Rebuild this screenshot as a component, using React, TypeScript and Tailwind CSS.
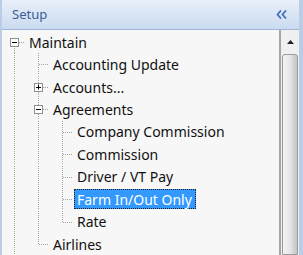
type Conn = "first" | "tee" | "last";

type Row = {
  label: string;
  guides: boolean[];
  conn: Conn;
  box?: "minus" | "plus";
  selected?: boolean;
};

const rows: Row[] = [
  { label: "Maintain", guides: [], conn: "first", box: "minus" },
  { label: "Accounting Update", guides: [true], conn: "tee" },
  { label: "Accounts...", guides: [true], conn: "tee", box: "plus" },
  { label: "Agreements", guides: [true], conn: "tee", box: "minus" },
  { label: "Company Commission", guides: [true, true], conn: "tee" },
  { label: "Commission", guides: [true, true], conn: "tee" },
  { label: "Driver / VT Pay", guides: [true, true], conn: "tee" },
  { label: "Farm In/Out Only", guides: [true, true], conn: "tee", selected: true },
  { label: "Rate", guides: [true, true], conn: "last" },
  { label: "Airlines", guides: [true], conn: "last" },
];

const DOT = "#a3a3a3";

function Guide({ on }: { on: boolean }) {
  return (
    <svg className="w-6 h-full shrink-0" shapeRendering="crispEdges">
      {on && (
        <line x1="12.5" x2="12.5" y1="0" y2="100%" stroke={DOT} strokeDasharray="1 1" />
      )}
    </svg>
  );
}

function Connector({ conn, box }: { conn: Conn; box?: "minus" | "plus" }) {
  return (
    <svg className="w-6 h-full shrink-0" shapeRendering="crispEdges">
      {conn === "first" && (
        <line x1="12.5" x2="12.5" y1="50%" y2="100%" stroke={DOT} strokeDasharray="1 1" />
      )}
      {conn === "tee" && (
        <line x1="12.5" x2="12.5" y1="0" y2="100%" stroke={DOT} strokeDasharray="1 1" />
      )}
      {conn === "last" && (
        <line x1="12.5" x2="12.5" y1="0" y2="50%" stroke={DOT} strokeDasharray="1 1" />
      )}
      <line x1="13" x2="23" y1="50%" y2="50%" stroke={DOT} strokeDasharray="1 1" transform="translate(0 0.5)" />
      {box && (
        <g transform="translate(0 -4)">
          <rect x="8.5" y="50%" width="8" height="8" fill="#ffffff" stroke="#8f8f8f" />
          <line x1="10" x2="15" y1="50%" y2="50%" stroke="#000" transform="translate(0 4.5)" />
        </g>
      )}
    </svg>
  );
}

export default function App() {
  return (
    <div
      className="w-[303px] h-[255px] overflow-hidden flex flex-col bg-[#f7f7f7] border-l-2 border-r-4 border-[#b9cde6]"
      style={{ fontFamily: '"Noto Sans", "Open Sans", sans-serif' }}
    >
      <div className="h-[30px] shrink-0 flex items-center justify-between pl-[10px] pr-[11px] bg-gradient-to-b from-[#e8eff9] to-[#cbdbf0] border-b border-[#9fb6d4]">
        <span className="text-[13px] text-[#3a5c95]">Setup</span>
        <svg width="12" height="9" viewBox="0 0 12 9">
          <path d="M5 0.5 L1.5 4.5 L5 8.5 M10 0.5 L6.5 4.5 L10 8.5" fill="none" stroke="#4372b8" strokeWidth="1.8" />
        </svg>
      </div>
      <div className="flex flex-1 min-h-0">
        <div className="flex-1 pt-[1px] text-[14px] text-[#111111]">
          {rows.map((r, i) => (
            <div key={i} className="h-[22.44px] flex items-stretch">
              {r.guides.map((g, j) => (
                <Guide key={j} on={g} />
              ))}
              <div className="relative flex shrink-0">
                <Connector conn={r.conn} box={r.box} />
                {r.box === "plus" && (
                  <div className="absolute left-[12px] top-1/2 -translate-y-1/2 h-[5px] w-px bg-black" />
                )}
              </div>
              <div className="flex items-center">
                {r.selected ? (
                  <span className="h-[20px] flex items-center px-[2px] pr-[3px] bg-[#3399ff] text-white border border-dotted border-[#202020] whitespace-nowrap">
                    {r.label}
                  </span>
                ) : (
                  <span className="px-[3px] whitespace-nowrap">{r.label}</span>
                )}
              </div>
            </div>
          ))}
        </div>
        <div className="w-[20px] shrink-0 flex flex-col border-l-2 border-[#a6a6a6] bg-[#f0f0f0]">
          <div className="h-[24px] shrink-0 flex items-center justify-center">
            <svg width="7" height="4" viewBox="0 0 7 4">
              <path d="M0 4 L3.5 0 L7 4 Z" fill="#202020" />
            </svg>
          </div>
          <div className="flex-1 mx-[1px] rounded-t-[3px] border border-[#9a9a9a] bg-gradient-to-r from-[#f4f4f4] via-[#e6e6e6] to-[#c4c4c4]" />
        </div>
      </div>
    </div>
  );
}
